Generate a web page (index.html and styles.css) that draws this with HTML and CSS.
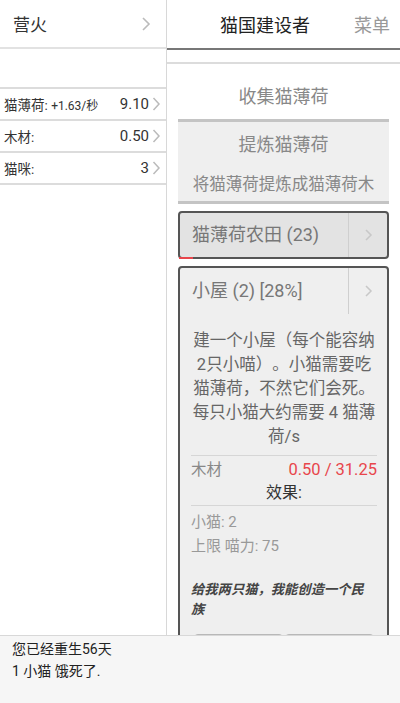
FILE: index.html
```html
<!DOCTYPE HTML>
<html>
<head>
  <title>猫国建设者</title>
  <meta name="viewport" content="width=device-width, initial-scale=1">
  <link rel="stylesheet" href="styles.css">
</head>
<body>
  <div class="main">
    <div class="left">
      <div class="left-head">
        <span>营火</span>
        <svg class="chev" width="10" height="16" viewBox="0 0 10 16"><polyline points="2,2 8,8 2,14" fill="none" stroke="#bbb" stroke-width="1.6"/></svg>
      </div>
      <div class="res-list">
        <div class="res-row">
          <span class="res-name">猫薄荷: <small>+1.63/秒</small></span>
          <span class="res-val">9.10</span>
          <svg class="res-chev" width="9" height="16" viewBox="0 0 9 16"><polyline points="1.5,2 7,8 1.5,14" fill="none" stroke="#bbb" stroke-width="1.5"/></svg>
        </div>
        <div class="res-row">
          <span class="res-name">木材:</span>
          <span class="res-val">0.50</span>
          <svg class="res-chev" width="9" height="16" viewBox="0 0 9 16"><polyline points="1.5,2 7,8 1.5,14" fill="none" stroke="#bbb" stroke-width="1.5"/></svg>
        </div>
        <div class="res-row">
          <span class="res-name">猫咪:</span>
          <span class="res-val">3</span>
          <svg class="res-chev" width="9" height="16" viewBox="0 0 9 16"><polyline points="1.5,2 7,8 1.5,14" fill="none" stroke="#bbb" stroke-width="1.5"/></svg>
        </div>
      </div>
    </div>

    <div class="right">
      <div class="right-head">
        <span class="title">猫国建设者</span>
        <span class="menu">菜单</span>
      </div>
      <div class="content">
        <div class="btn-plain">收集猫薄荷</div>
        <div class="btn-refine">
          <div class="refine-title">提炼猫薄荷</div>
          <div class="refine-sub">将猫薄荷提炼成猫薄荷木</div>
        </div>

        <div class="bld">
          <div class="bld-head">
            <span class="bld-name">猫薄荷农田 (23)</span>
            <span class="bld-more"><svg width="9" height="16" viewBox="0 0 9 16"><polyline points="2,3 7,8 2,13" fill="none" stroke="#c8c8c8" stroke-width="1.5"/></svg></span>
          </div>
          <div class="progress"></div>
        </div>

        <div class="bld bld-open">
          <div class="bld-head">
            <span class="bld-name">小屋 (2) [28%]</span>
            <span class="bld-more"><svg width="9" height="16" viewBox="0 0 9 16"><polyline points="2,3 7,8 2,13" fill="none" stroke="#c8c8c8" stroke-width="1.5"/></svg></span>
          </div>
          <div class="bld-body">
            <p class="desc">建一个小屋（每个能容纳2只小喵）。小猫需要吃猫薄荷，不然它们会死。每只小猫大约需要 4 猫薄荷/s</p>
            <div class="price">
              <span>木材</span>
              <span class="short">0.50 / 31.25</span>
            </div>
            <div class="effects-title">效果:</div>
            <div class="effects">
              <div>小猫: 2</div>
              <div>上限 喵力: 75</div>
            </div>
            <p class="flavor">给我两只猫，我能创造一个民族</p>
            <div class="bld-btns">
              <span></span>
              <span></span>
            </div>
          </div>
        </div>
      </div>
    </div>
  </div>

  <div class="log">
    <div>您已经重生56天</div>
    <div>1 小猫 饿死了.</div>
  </div>
</body>
</html>
```

FILE: styles.css
```css
body {
  margin: 0;
  width: 400px;
  height: 703px;
  overflow: hidden;
  font-family: Roboto, "Noto Sans CJK SC", sans-serif;
  background-color: #fff;
  color: #333;
  display: flex;
  flex-direction: column;
  text-spacing-trim: space-all;
}

.main {
  display: flex;
  height: 635px;
  overflow: hidden;
}

/* left column */
.left {
  width: 166px;
  border-right: 1px solid #d8d8d8;
}

.left-head {
  height: 47px;
  border-bottom: 2px solid #e2e2e2;
  display: flex;
  align-items: center;
  justify-content: space-between;
  padding: 0 15px 0 13px;
  font-size: 17px;
  color: #333;
}

.res-list {
  margin-top: 38px;
}

.res-row {
  display: flex;
  align-items: center;
  height: 30px;
  border-top: 2px solid #dcdcdc;
  padding: 0 5px 0 4px;
  font-size: 13.5px;
  color: #333;
}

.res-row:last-child {
  border-bottom: 2px solid #dcdcdc;
}

.res-name {
  flex: 1;
}

.res-name small {
  font-size: 12px;
}

.res-val {
  font-size: 15px;
  margin-right: 3px;
}

/* right column */
.right {
  flex: 1;
}

.right-head {
  height: 48px;
  border-bottom: 2px solid #777;
  display: flex;
  align-items: center;
}

.title {
  flex: 1;
  text-align: center;
  font-size: 18px;
  color: #222;
  padding-left: 9px;
}

.menu {
  font-size: 18px;
  color: #999;
  padding-right: 10px;
}

.content {
  margin-top: 12px;
  border-top: 2px solid #dcdcdc;
  padding: 0 11px 0 11px;
}

.btn-plain {
  height: 45px;
  line-height: 45px;
  padding-top: 10px;
  text-align: center;
  font-size: 18px;
  color: #888;
  border-bottom: 3px solid #c4c4c4;
}

.btn-refine {
  background-color: #efefef;
  height: 79px;
  border-bottom: 3px solid #c4c4c4;
  text-align: center;
  color: #888;
}

.refine-title {
  font-size: 18px;
  line-height: 22px;
  padding-top: 12px;
}

.refine-sub {
  font-size: 16.5px;
  line-height: 22px;
  margin-top: 18px;
}

.bld {
  margin-top: 7px;
  border: 2px solid #555;
  border-radius: 4px;
  background-color: #e3e3e3;
  position: relative;
}

.bld-head {
  display: flex;
  height: 44px;
}

.bld-name {
  flex: 1;
  padding-left: 12px;
  line-height: 44px;
  font-size: 18px;
  color: #777;
}

.bld-more {
  width: 38px;
  border-left: 1px solid #cfcfcf;
  display: flex;
  align-items: center;
  justify-content: center;
}

.progress {
  position: absolute;
  left: -1px;
  bottom: -2px;
  width: 14px;
  height: 2px;
  background-color: #e8464c;
}

.bld-open {
  background-color: #efefef;
  height: 400px;
}

.bld-open .bld-head {
  height: 46px;
}

.bld-open .bld-name {
  line-height: 46px;
}

.bld-body {
  padding: 0 10px 0 11px;
}

.desc {
  margin: 15px 0 6px 0;
  text-align: center;
  font-size: 16.5px;
  line-height: 24px;
  color: #666;
}

.price {
  display: flex;
  justify-content: space-between;
  align-items: baseline;
  border-top: 1px solid #d6d6d6;
  padding-top: 1px;
  font-size: 15.5px;
  color: #888;
  height: 22px;
}

.short {
  font-size: 16.5px;
  color: #e8464c;
}

.effects-title {
  text-align: center;
  font-size: 16px;
  color: #333;
  height: 26px;
  border-bottom: 1px solid #d6d6d6;
}

.effects {
  padding-top: 4px;
  font-size: 15px;
  line-height: 24px;
  color: #999;
}

.flavor {
  margin: 22px 6px 0 0;
  font-size: 13.3px;
  line-height: 20px;
  font-style: italic;
  font-weight: bold;
  color: #444;
}

.bld-btns {
  display: flex;
  margin-top: 14px;
  padding: 0 2px;
}

.bld-btns span {
  flex: 1;
  height: 20px;
  border: 1px solid #b8b8b8;
  border-radius: 5px 5px 0 0;
  background-color: #f4f4f4;
}

/* log */
.log {
  flex: 1;
  background-color: #f6f6f6;
  border-top: 1px solid #d8d8d8;
  padding: 2px 12px;
  font-size: 14px;
  line-height: 22px;
  color: #222;
}
```
